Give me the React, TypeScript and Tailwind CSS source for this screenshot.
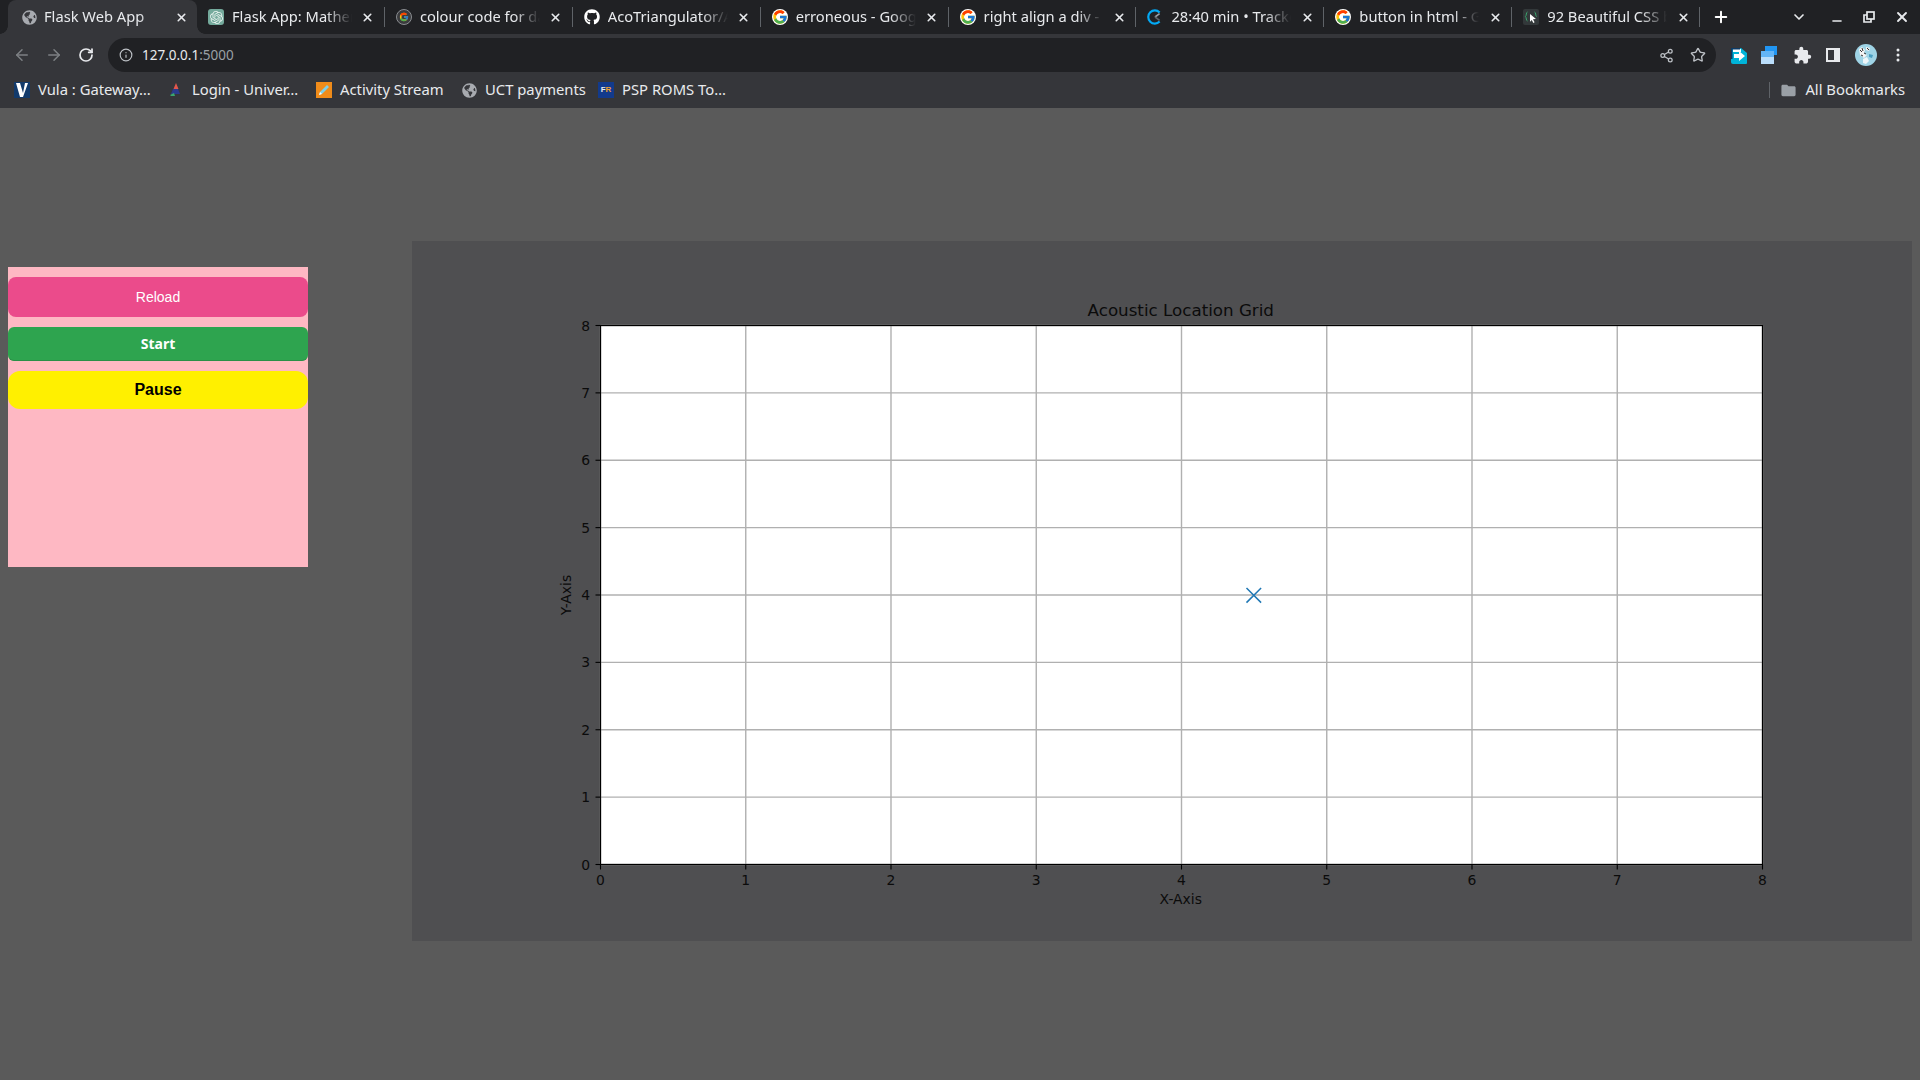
import type { ReactNode } from "react";
import { ArrowLeft, ArrowRight, ChevronDown, Info, Minus, Plus, RotateCw, Share2, Star, X } from "lucide-react";
import { FaGithub, FaGlobeAmericas } from "react-icons/fa";
import { FcGoogle } from "react-icons/fc";
import { MdExtension, MdFolder } from "react-icons/md";
import { SiOpenai } from "react-icons/si";

const uiFont = "font-['Noto_Sans',sans-serif]";

function Globe() {
  return <FaGlobeAmericas size={15} className="text-[#a8abb0]" />;
}

function OpenAiIcon() {
  return (
    <span className="flex h-4 w-4 items-center justify-center rounded-[3px] bg-[#74aa9c]">
      <SiOpenai size={13} className="text-[#e8f3ef]" />
    </span>
  );
}

function GoogleRingIcon() {
  return (
    <span className="flex h-4 w-4 items-center justify-center rounded-full border border-[#8a8d91] bg-[#3a3b3e]">
      <FcGoogle size={10} />
    </span>
  );
}

function TrackerIcon() {
  return (
    <svg width="16" height="16" viewBox="0 0 16 16" fill="none">
      <path d="M12.6 3.4A6.6 6.6 0 1 0 12.6 12.6" stroke="#03a9f4" strokeWidth="2.2" />
      <path d="M8 8l4.6-3.4" stroke="#9aa0a6" strokeWidth="1.6" />
      <path d="M8 8l4.6 3.4" stroke="#5f6368" strokeWidth="1.6" />
    </svg>
  );
}

function CodeCursorIcon() {
  return (
    <svg width="16" height="16" viewBox="0 0 16 16" fill="none">
      <rect width="16" height="16" rx="2" fill="#33383a" />
      <path d="M4.5 3C3 3 3.6 7 2.4 7.6 3.6 8.2 3 12 4.5 12" stroke="#3aa76d" strokeWidth="1" />
      <path d="M11.5 3C13 3 12.4 7 13.6 7.6" stroke="#3aa76d" strokeWidth="1" />
      <path d="M7 5l6 5-3 .3 1.6 3-1.3.6-1.5-3-1.8 1.9z" fill="#fff" />
    </svg>
  );
}

const tabs: { title: string; icon: ReactNode }[] = [
  { title: "Flask App: Mathematical", icon: <OpenAiIcon /> },
  { title: "colour code for dark grey", icon: <GoogleRingIcon /> },
  { title: "AcoTriangulator/AcoTriangulator", icon: <FaGithub size={16} className="text-white" /> },
  { title: "erroneous - Google Search", icon: <FcGoogle size={16} className="rounded-full bg-white" /> },
  { title: "right align a div - Google Search", icon: <FcGoogle size={16} className="rounded-full bg-white" /> },
  { title: "28:40 min • Tracker", icon: <TrackerIcon /> },
  { title: "button in html - Google Search", icon: <FcGoogle size={16} className="rounded-full bg-white" /> },
  { title: "92 Beautiful CSS buttons", icon: <CodeCursorIcon /> },
];

function TabTitle({ children }: { children: ReactNode }) {
  return (
    <span className="min-w-0 flex-1 overflow-hidden whitespace-nowrap pb-[2px] text-[14.7px] text-[#e8eaed] [mask-image:linear-gradient(to_right,black_calc(100%-34px),transparent_calc(100%-8px))]">
      {children}
    </span>
  );
}

function TabStrip() {
  return (
    <div className="flex h-[34px] items-center bg-[#202124] pl-2">
      <div className="relative flex h-[34px] w-[189px] shrink-0 items-center rounded-t-lg bg-[#35363a] pl-[13px] pr-2">
        <span className="absolute -left-2 bottom-0 h-2 w-2 bg-[radial-gradient(circle_at_0_0,#202124_7.5px,#35363a_8px)]" />
        <span className="absolute -right-2 bottom-0 h-2 w-2 bg-[radial-gradient(circle_at_100%_0,#202124_7.5px,#35363a_8px)]" />
        <span className="mr-[7px] flex w-4 justify-center">
          <Globe />
        </span>
        <TabTitle>Flask Web App</TabTitle>
        <X size={13} strokeWidth={3} className="mx-[1.5px] text-[#e8eaed]" />
      </div>
      {tabs.map((tab) => (
        <div key={tab.title} className="flex h-[34px] w-[187.9px] shrink-0 items-center pl-[11px] pr-0">
          <span className="mr-2 flex w-4 justify-center">{tab.icon}</span>
          <TabTitle>{tab.title}</TabTitle>
          <X size={13} strokeWidth={3} className="mx-[1.5px] text-[#e8eaed]" />
          <span className="ml-2 h-5 w-px bg-[#5f6368]" />
        </div>
      ))}
      <Plus size={18} strokeWidth={2.6} className="ml-[12px] text-white" />
      <div className="ml-auto flex items-center pr-[2px] text-[#e8eaed]">
        <span className="flex w-8 justify-center">
          <ChevronDown size={16} strokeWidth={2.5} />
        </span>
        <span className="ml-[6px] flex w-8 justify-center pt-2">
          <Minus size={14} strokeWidth={2.5} />
        </span>
        <span className="flex w-8 justify-center">
          <svg width="12" height="12" viewBox="0 0 12 12" fill="none" stroke="currentColor" strokeWidth="1.7">
            <rect x="4" y="1" width="7" height="7" />
            <path d="M4 4H1v7h7V8" />
          </svg>
        </span>
        <span className="ml-px flex w-8 justify-center">
          <X size={16} strokeWidth={2.8} />
        </span>
      </div>
    </div>
  );
}

function Toolbar() {
  return (
    <div className="flex h-[38px] items-end bg-[#35363a]">
      <div className="flex h-[34px] w-[108px] items-center pl-[6px]">
        <span className="flex w-8 justify-center">
          <ArrowLeft size={18} className="text-[#7d8084]" />
        </span>
        <span className="flex w-8 justify-center">
          <ArrowRight size={18} className="text-[#7d8084]" />
        </span>
        <span className="flex w-8 justify-center">
          <RotateCw size={16} strokeWidth={2.6} className="text-[#e8eaed]" />
        </span>
      </div>
      <div className="flex h-[34px] w-[1608px] items-center rounded-full bg-[#202124] pl-[11px] pr-[10px]">
        <Info size={14} className="text-[#bdc1c6]" />
        <span className="ml-[9px] text-[13.5px] text-[#e8eaed]">
          127.0.0.1<span className="text-[#9aa0a6]">:5000</span>
        </span>
        <Share2 size={15} className="ml-auto text-[#bdc1c6]" />
        <Star size={16} className="ml-4 text-[#bdc1c6]" />
      </div>
      <div className="flex h-[34px] items-center pl-2">
        <span className="flex w-[30px] justify-center">
          <svg width="16" height="17" viewBox="0 0 16 17">
            <path d="M0 1h10l6 5v10a1 1 0 0 1-1 1H2a2 2 0 0 1-2-2z" fill="#00b4d8" />
            <path d="M2 2h8v3H2z" fill="#fff" />
            <path d="M3 7h5V4l6 5-6 5v-3H3z" fill="#fff" />
            <path d="M0 1h9v1.500H1.500V12H0z" fill="#0d3b66" />
          </svg>
        </span>
        <span className="flex w-[30px] justify-center">
          <svg width="16" height="18" viewBox="0 0 16 18">
            <path d="M4 0h12v9h-3V5H4z" fill="#2196f3" />
            <path d="M0 5h13v6H0z" fill="#64b5f6" />
            <path d="M0 11h13v7H0z" fill="#bbdefb" />
          </svg>
        </span>
        <span className="flex w-[36px] justify-center">
          <MdExtension size={19} className="text-[#e8eaed]" />
        </span>
        <span className="flex w-[26px] justify-center">
          <svg width="14" height="14" viewBox="0 0 14 14">
            <path fillRule="evenodd" d="M0 0h14v14H0zM2 2v10h6V2z" fill="#e8eaed" />
          </svg>
        </span>
        <span className="flex w-[40px] justify-center">
          <svg width="22" height="22" viewBox="0 0 22 22">
            <circle cx="11" cy="11" r="11" fill="#9fd4e6" />
            <path d="M4 5l3-2 3 3-1 3 3 2-3 3-4-3zM11 3l4 1-1 3-3-1z" fill="#f4f4f4" />
            <path d="M5 6l2 2M7 4l1 3M9 9l2 1M12 4l2 2M6 11l2 1" stroke="#333" strokeWidth="1" />
            <path d="M8 15l4-2 2 4-3 3-3-1z" fill="#eef6f9" />
            <path d="M14 10l4 1-1 3-3-1z" fill="#4a9fc2" />
          </svg>
        </span>
        <span className="flex w-6 justify-center">
          <svg width="4" height="14" viewBox="0 0 4 14" fill="#e8eaed">
            <circle cx="2" cy="2" r="1.500" />
            <circle cx="2" cy="7" r="1.500" />
            <circle cx="2" cy="12" r="1.500" />
          </svg>
        </span>
      </div>
    </div>
  );
}

function Bookmark({ icon, label, width }: { icon: ReactNode; label: string; width: string }) {
  return (
    <div className={`flex items-center gap-2 ${width}`}>
      <span className="flex w-4 justify-center">{icon}</span>
      <span className="whitespace-nowrap pb-[2px] text-[14.8px] text-[#e8eaed]">{label}</span>
    </div>
  );
}

function BookmarksBar() {
  return (
    <div className="flex h-9 items-center bg-[#35363a] pl-[14px] pr-[15px]">
      <Bookmark
        width="w-[154px]"
        label="Vula : Gateway…"
        icon={
          <svg width="16" height="16" viewBox="0 0 16 16">
            <rect width="16" height="16" fill="#123a6b" />
            <path d="M2 1h4l3 10 2-10h3L9 15H6z" fill="#fff" />
          </svg>
        }
      />
      <Bookmark
        width="w-[148px]"
        label="Login - Univer…"
        icon={
          <svg width="12" height="14" viewBox="0 0 12 14">
            <path d="M6 0l2.500 6h-5z" fill="#e2574c" />
            <path d="M3 6h5l2 5H1z" fill="#2b3a8c" />
            <path d="M0 12l4-2 1 3H1z" fill="#3aa76d" />
          </svg>
        }
      />
      <Bookmark
        width="w-[145px]"
        label="Activity Stream"
        icon={
          <svg width="16" height="16" viewBox="0 0 16 16">
            <rect width="16" height="16" fill="#f08c1a" />
            <path d="M3 13l1-3 7-7 2 2-7 7z" fill="#7fd0e8" />
            <path d="M3 13l1-3 2 2z" fill="#fff" />
          </svg>
        }
      />
      <Bookmark width="w-[137px]" label="UCT payments" icon={<FaGlobeAmericas size={15} className="text-[#a8abb0]" />} />
      <Bookmark
        width="w-[140px]"
        label="PSP ROMS To…"
        icon={
          <span className="flex h-4 w-4 items-center justify-center bg-[#123a8c] font-['Liberation_Sans',sans-serif] text-[8px] font-bold text-[#e8eaed]">
            F<span className="text-[#f0a030]">R</span>
          </span>
        }
      />
      <div className="ml-auto flex items-center">
        <span className="mr-[10px] h-4 w-px bg-[#5f6368]" />
        <MdFolder size={17} className="mr-2 text-[#9aa0a6]" />
        <span className="whitespace-nowrap pb-[2px] text-[14.8px] text-[#e8eaed]">All Bookmarks</span>
      </div>
    </div>
  );
}

const ticks = [0, 1, 2, 3, 4, 5, 6, 7, 8];
const axLeft = 188.5;
const axRight = 1350.5;
const axTop = 84.5;
const axBottom = 623.5;
const xAt = (v: number) => axLeft + (v * (axRight - axLeft)) / 8;
const yAt = (v: number) => axBottom - (v * (axBottom - axTop)) / 8;

function LocationChart() {
  return (
    <svg width="1500" height="700" viewBox="0 0 1500 700" className="block font-['DejaVu_Sans',sans-serif]">
      <rect x={axLeft} y={axTop} width={axRight - axLeft} height={axBottom - axTop} fill="#fff" />
      {ticks.map((t) => (
        <g key={t} fill="#0b0b0b" fontSize="13.9">
          <line x1={xAt(t)} x2={xAt(t)} y1={axTop} y2={axBottom} stroke="#b0b0b0" strokeWidth="1.4" />
          <line x1={axLeft} x2={axRight} y1={yAt(t)} y2={yAt(t)} stroke="#b0b0b0" strokeWidth="1.4" />
          <line x1={xAt(t)} x2={xAt(t)} y1={axBottom} y2={axBottom + 5} stroke="#000" strokeWidth="1.1" />
          <line x1={axLeft - 5} x2={axLeft} y1={yAt(t)} y2={yAt(t)} stroke="#000" strokeWidth="1.1" />
          <text x={xAt(t)} y={644} textAnchor="middle">
            {t}
          </text>
          <text x={178} y={yAt(t) + 5} textAnchor="end">
            {t}
          </text>
        </g>
      ))}
      <rect x={axLeft} y={axTop} width={axRight - axLeft} height={axBottom - axTop} fill="none" stroke="#000" strokeWidth="1.2" />
      <path d="M834.500 347l14.600 14.600M849.100 347l-14.600 14.600" stroke="#1f77b4" strokeWidth="1.500" fill="none" />
      <text x={768.75} y={75} textAnchor="middle" fontSize="16.7" fill="#0b0b0b">
        Acoustic Location Grid
      </text>
      <text x={768.75} y={663} textAnchor="middle" fontSize="13.9" fill="#0b0b0b">
        X-Axis
      </text>
      <text transform="translate(159 354) rotate(-90)" textAnchor="middle" fontSize="13.9" fill="#0b0b0b">
        Y-Axis
      </text>
    </svg>
  );
}

function Controls() {
  return (
    <div className="mt-[26px] flex h-[300px] w-[300px] shrink-0 flex-col gap-[10px] bg-[#feb8c3] pt-[10px]">
      <button className="h-10 w-full rounded-lg bg-[#eb4b8b] font-['Liberation_Sans',sans-serif] text-[14px] text-white">Reload</button>
      <button className="h-[34px] w-full rounded-md border-b border-[#2a8f47] bg-[#2ea44f] font-['Noto_Sans',sans-serif] text-[14px] font-bold text-white">
        Start
      </button>
      <button className="h-[38px] w-full rounded-xl bg-[#fff000] font-['Liberation_Sans',sans-serif] text-[16px] font-bold text-black">Pause</button>
    </div>
  );
}

export default function App() {
  return (
    <div className={`flex h-[1080px] w-[1920px] flex-col overflow-hidden bg-[#5a5a5a] ${uiFont}`}>
      <TabStrip />
      <Toolbar />
      <BookmarksBar />
      <main className="flex flex-1 items-start pl-2 pt-[133px]">
        <Controls />
        <section className="ml-[104px] h-[700px] w-[1500px] shrink-0 bg-[#4f4f51]">
          <LocationChart />
        </section>
      </main>
    </div>
  );
}
